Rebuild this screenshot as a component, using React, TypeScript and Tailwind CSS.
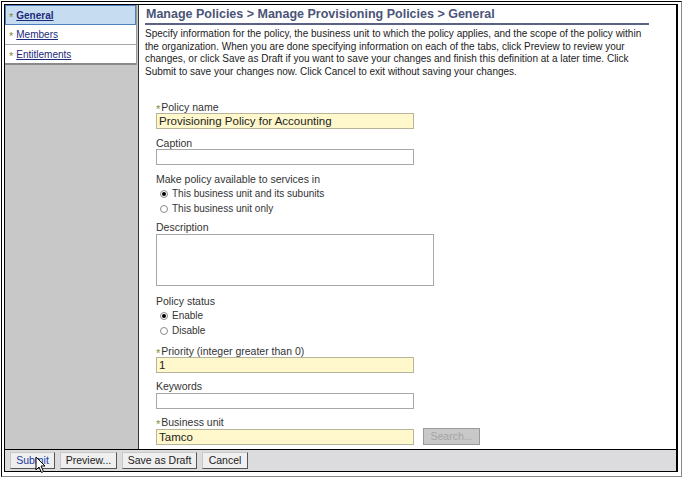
const FONT = { fontFamily: '"Liberation Sans", Arial, sans-serif' }

function Star({ gap = 'mr-[3px]' }: { gap?: string }) {
  return <span className={`relative top-[2px] text-[11px] text-[#8a8a30] ${gap}`}>*</span>
}

function Label({ children, req }: { children: React.ReactNode; req?: boolean }) {
  return (
    <div className="h-[12px] whitespace-nowrap text-[10.5px] leading-[12px] text-[#333]">
      {req && <Star gap="mr-[1px]" />}
      {children}
    </div>
  )
}

function Field({ value, req }: { value?: string; req?: boolean }) {
  return (
    <div
      className={`h-[16px] w-[258px] border px-[2px] text-[11.5px] leading-[14px] text-[#222] ${
        req ? 'border-[#b8b49a] bg-[#fff8cc]' : 'border-[#a8a8a8] bg-white'
      }`}
    >
      {value}
    </div>
  )
}

function Radio({ label, checked }: { label: string; checked?: boolean }) {
  return (
    <div className="flex h-[15px] items-center pl-[4px] text-[10px] text-[#333]">
      <span className="mr-[4px] flex h-[8px] w-[8px] items-center justify-center rounded-full border border-[#8a8a8a] bg-white">
        {checked && <span className="h-[4px] w-[4px] rounded-full bg-black" />}
      </span>
      {label}
    </div>
  )
}

function Btn({ children, w, active }: { children: React.ReactNode; w: string; active?: boolean }) {
  return (
    <div
      className={`flex h-[17px] items-center justify-center border border-t-[#c8c8c8] border-l-[#c8c8c8] border-r-[#555] border-b-[#555] bg-[#efefef] text-[10.5px] ${w} ${
        active ? 'text-[#1a3aa0]' : 'text-[#222]'
      }`}
    >
      {children}
    </div>
  )
}

export default function App() {
  return (
    <div style={FONT} className="h-[478px] w-[683px] bg-white p-[1px]">
      <div className="h-[476px] w-[681px] border border-t-black border-l-black border-r-[#888] border-b-[#888] pt-[2px] pl-[2px] pr-[3px] pb-[3px]">
        <div className="flex h-[468px] flex-col border border-black border-r-2">
          <div className="flex min-h-0 flex-1">
            {/* sidebar */}
            <div className="w-[134px] shrink-0 border-r border-[#333] bg-[#c8c8c8]">
              <div className="w-[132px] border-r border-[#9a9a9a]">
                <div className="flex h-[20px] items-center border border-[#4d7fbf] bg-[#c6dcf1] pl-[3px] text-[10px]">
                  <Star />
                  <span className="font-bold text-[#1c2a7a] underline">General</span>
                </div>
                <div className="flex h-[20px] items-center border-b border-[#a8a8a8] bg-white pl-[4px] text-[10px]">
                  <Star />
                  <span className="text-[#1c2a7a] underline">Members</span>
                </div>
                <div className="flex h-[20px] items-center border-b-2 border-[#8a8a8a] bg-white pl-[4px] text-[10px]">
                  <Star />
                  <span className="text-[#1c2a7a] underline">Entitlements</span>
                </div>
              </div>
            </div>

            {/* content */}
            <div className="min-w-0 flex-1 overflow-hidden pl-[6px]">
              <div className="w-[504px] border-b-2 border-[#5c6284] pt-[2px] pb-[1px] pl-[1px] text-[12.5px] font-bold leading-[15px] text-[#4b5478]">
                Manage Policies &gt; Manage Provisioning Policies &gt; General
              </div>
              <p className="mt-[3px] whitespace-nowrap text-[10px] leading-[12.5px] text-[#222]">
                Specify information for the policy, the business unit to which the policy applies, and the scope of the policy within
                <br />
                the organization. When you are done specifying information on each of the tabs, click Preview to review your
                <br />
                changes, or click Save as Draft if you want to save your changes and finish this definition at a later time. Click
                <br />
                Submit to save your changes now. Click Cancel to exit without saving your changes.
              </p>

              <div className="ml-[11px] mt-[23px]">
                <Label req>Policy name</Label>
                <Field req value="Provisioning Policy for Accounting" />

                <div className="mt-[8px]">
                  <Label>Caption</Label>
                  <Field />
                </div>

                <div className="mt-[8px]">
                  <Label>Make policy available to services in</Label>
                  <div className="pt-[1px]">
                    <Radio checked label="This business unit and its subunits" />
                    <Radio label="This business unit only" />
                  </div>
                </div>

                <div className="mt-[5px]">
                  <Label>Description</Label>
                  <div className="mt-[1px] h-[52px] w-[278px] border border-[#a8a8a8] bg-white" />
                </div>

                <div className="mt-[9px]">
                  <Label>Policy status</Label>
                  <div className="pt-[1px]">
                    <Radio checked label="Enable" />
                    <Radio label="Disable" />
                  </div>
                </div>

                <div className="mt-[7px]">
                  <Label req>Priority (integer greater than 0)</Label>
                  <Field req value="1" />
                </div>

                <div className="mt-[7px]">
                  <Label>Keywords</Label>
                  <div className="mt-[1px]">
                    <Field />
                  </div>
                </div>

                <div className="mt-[7px]">
                  <Label req>Business unit</Label>
                  <div className="mt-[1px] flex items-start gap-[9px]">
                    <Field req value="Tamco" />
                    <div className="-mt-[1px] flex h-[17px] w-[57px] items-center justify-center border border-[#9a9a9a] bg-[#c8c8c8] text-[10.5px] text-[#a4a4a4]">
                      Search...
                    </div>
                  </div>
                </div>
              </div>
            </div>
          </div>

          {/* footer */}
          <div className="relative flex h-[22px] shrink-0 items-center gap-[5px] border-t border-black bg-[#dcdcde] pl-[5px]">
            <Btn active w="w-[45px]">Submit</Btn>
            <Btn w="w-[57px]">Preview...</Btn>
            <Btn w="w-[75px]">Save as Draft</Btn>
            <Btn w="w-[46px]">Cancel</Btn>
            <svg className="absolute left-[30px] top-[6px]" width="12" height="18" viewBox="0 0 12 18">
              <path d="M1 1 L1 14 L4 11 L6.5 16.5 L8.5 15.5 L6 10 L10 10 Z" fill="white" stroke="black" strokeWidth="1" strokeLinejoin="miter" />
            </svg>
          </div>
        </div>
      </div>
    </div>
  )
}
